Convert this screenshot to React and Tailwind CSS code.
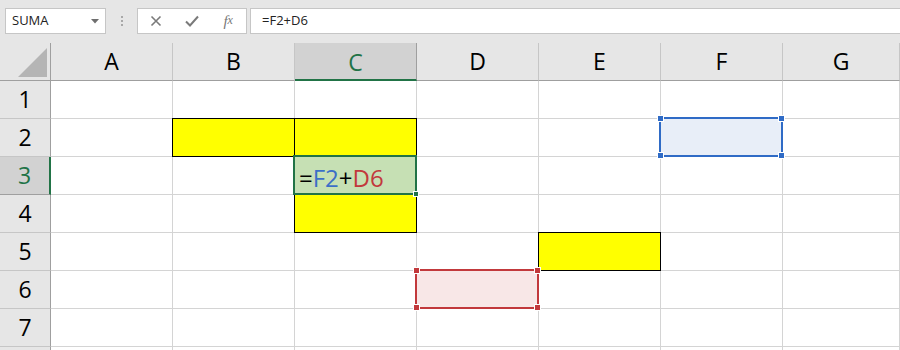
import React from 'react';

const cols = ['A', 'B', 'C', 'D', 'E', 'F', 'G'];
const rows = [1, 2, 3, 4, 5, 6, 7, 8];

const yellow = ['B2', 'C2', 'C4', 'E5'];

// Little square handles on the corners of a reference range
const Handles = ({ color }) => (
  <>
    <span className={`absolute -left-[4px] -top-[4px] h-[7px] w-[7px] border border-white ${color}`} />
    <span className={`absolute -right-[4px] -top-[4px] h-[7px] w-[7px] border border-white ${color}`} />
    <span className={`absolute -left-[4px] -bottom-[4px] h-[7px] w-[7px] border border-white ${color}`} />
    <span className={`absolute -right-[4px] -bottom-[4px] h-[7px] w-[7px] border border-white ${color}`} />
  </>
);

const Cell = ({ id }) => {
  const isYellow = yellow.includes(id);
  return (
    <div className="relative border-r border-b border-[#d4d4d4] bg-white">
      {isYellow && (
        <div className="absolute -left-px -top-px -right-px -bottom-px z-10 border border-black bg-[#ffff00]" />
      )}
      {id === 'C3' && (
        <div className="absolute -left-[2px] -top-[2px] -right-[1px] -bottom-[1px] z-20 flex items-end border-2 border-[#217346] bg-[#c6e0b4] pb-[3px] pl-[4px] text-[24px] leading-none">
          <span className="text-black">=</span>
          <span className="text-[#3b6fc7]">F2</span>
          <span className="text-black">+</span>
          <span className="text-[#c2393c]">D6</span>
          <span className="absolute -right-[4px] -bottom-[4px] h-[6px] w-[6px] border border-white bg-[#217346]" />
        </div>
      )}
      {id === 'F2' && (
        <div className="absolute -left-[2px] -top-[2px] -right-[1px] -bottom-[1px] z-20 border-2 border-[#2f6bc6] bg-[#e8eef8]">
          <Handles color="bg-[#2f6bc6]" />
        </div>
      )}
      {id === 'D6' && (
        <div className="absolute -left-[2px] -top-[2px] -right-[1px] -bottom-[1px] z-20 border-2 border-[#c2393c] bg-[#f8e7e7]">
          <Handles color="bg-[#c2393c]" />
        </div>
      )}
    </div>
  );
};

export default function App() {
  return (
    <div className="h-[350px] w-[900px] overflow-hidden bg-[#e6e6e6] font-['Open_Sans','Liberation_Sans',sans-serif]">
      {/* Formula bar */}
      <div className="flex h-[43px] items-start gap-0 pt-[8px] pl-[5px]">
        <div className="flex h-[26px] w-[101px] items-center justify-between border border-[#c6c6c6] bg-white pl-[6px] pr-[6px] text-[13px] text-[#222]">
          <span>SUMA</span>
          <svg width="8" height="5" viewBox="0 0 8 5">
            <path d="M0 0h8L4 4.5z" fill="#6e6e6e" />
          </svg>
        </div>
        <div className="flex h-[26px] w-[31px] flex-col items-center justify-center gap-[2px]">
          <span className="h-[2px] w-[2px] bg-[#a8a8a8]" />
          <span className="h-[2px] w-[2px] bg-[#a8a8a8]" />
          <span className="h-[2px] w-[2px] bg-[#a8a8a8]" />
        </div>
        <div className="flex h-[26px] w-[110px] items-center border border-[#c6c6c6] bg-white text-[#787878]">
          <div className="flex w-[37px] justify-center">
            <svg width="12" height="12" viewBox="0 0 12 12">
              <path d="M1.5 1.5l9 9M10.5 1.5l-9 9" stroke="#7a7a7a" strokeWidth="1.6" />
            </svg>
          </div>
          <div className="flex w-[36px] justify-center">
            <svg width="14" height="12" viewBox="0 0 14 12">
              <path d="M1 6.5l4 4L13 1.5" fill="none" stroke="#7a7a7a" strokeWidth="2" />
            </svg>
          </div>
          <div className="flex w-[36px] justify-center font-['Liberation_Serif',serif] text-[15px] italic">
            <span>f</span>
            <span className="text-[12px] leading-[21px]">x</span>
          </div>
        </div>
        <div className="ml-[3px] flex h-[26px] flex-1 items-center border border-r-0 border-[#c6c6c6] bg-white pl-[11px] text-[13px] text-[#222]">
          =F2+D6
        </div>
      </div>

      {/* Sheet grid */}
      <div className="grid grid-cols-[51px_repeat(6,122px)_117px] grid-rows-[38px_repeat(8,38px)]">
        <div className="relative border-r border-b border-[#9f9f9f] bg-[#e6e6e6]">
          <svg className="absolute right-[3px] bottom-[3px]" width="29" height="29" viewBox="0 0 29 29">
            <path d="M29 0V29H0z" fill="#b5b5b5" />
          </svg>
        </div>
        {cols.map((c) => (
          <div
            key={c}
            className={`flex items-center justify-center border-r text-[23px] ${
              c === 'C'
                ? 'border-b-2 border-r-[#9f9f9f] border-b-[#217346] bg-[#d2d2d2] pt-[2px] text-[#217346]'
                : 'border-b border-r-[#c6c6c6] border-b-[#9f9f9f] bg-[#e6e6e6] text-black'
            }`}
          >
            {c}
          </div>
        ))}
        {rows.map((r) => (
          <React.Fragment key={r}>
            <div
              className={`flex items-center justify-center border-b text-[23px] ${
                r === 3
                  ? 'border-r-2 border-r-[#217346] border-b-[#9f9f9f] bg-[#d2d2d2] text-[#217346]'
                  : 'border-r border-r-[#9f9f9f] border-b-[#c6c6c6] bg-[#e6e6e6] text-black'
              }`}
            >
              {r < 8 ? r : ''}
            </div>
            {cols.map((c) => (
              <Cell key={c + r} id={c + r} />
            ))}
          </React.Fragment>
        ))}
      </div>
    </div>
  );
}
